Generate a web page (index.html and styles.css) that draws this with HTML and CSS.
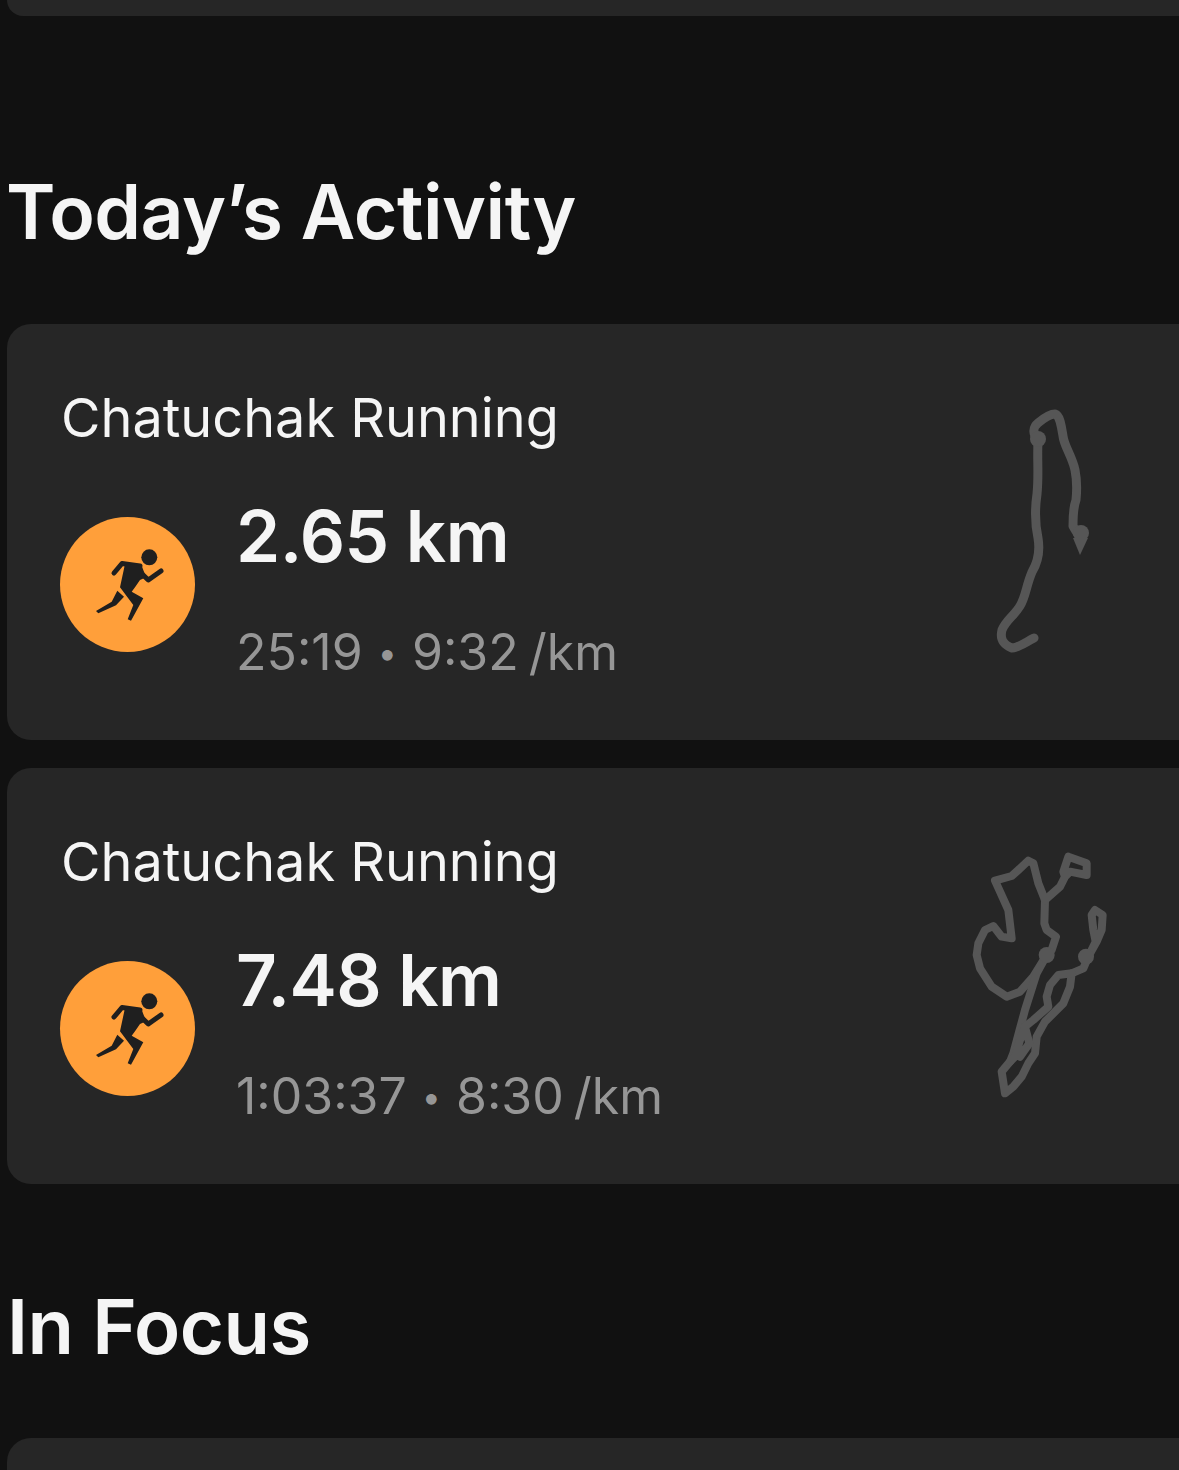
FILE: index.html
```html
<!DOCTYPE html>
<html lang="en">
<head>
    <meta charset="UTF-8">
    <title>Today's Activity</title>
    <link rel="stylesheet" href="styles.css">
</head>
<body>

    <!-- Bottom of the card above -->
    <div class="card-top-stub"></div>

    <h2 class="section-title first">Today’s Activity</h2>

    <div class="card">
        <div class="card-info">
            <div class="card-name">Chatuchak Running</div>
            <div class="card-row">
                <div class="run-badge">
                    <svg class="run-icon" viewBox="0 0 135 135">
                        <circle cx="89.3" cy="40.3" r="8"/>
                        <path class="limb" d="M54 56 L62 46.5 L80 49 M80 55 L88.3 63 L101 54"/>
                        <path d="M65 47 L81.7 48.7 L86 60.3 L80 63 L75 70.3 L71.7 74.7 L83.3 81.3 L71 103.7 L67.7 102.3 L73.3 88 L60 70.3 Z"/>
                        <path d="M57.3 73.7 L64 79.7 L56 88.3 L38.3 96.3 L36 94 L51.7 84.7 Z"/>
                    </svg>
                </div>
                <div class="stats">
                    <div class="distance">2.65 km</div>
                    <div class="pace">25:19 <span class="dot">•</span> 9:32 /km</div>
                </div>
            </div>
        </div>
        <svg class="track" viewBox="0 0 160 280">
            <path d="M78 50 C72 44 73 37 78 33 C84 28 90 24 95 24 C100 26 101 34 103 46 C104 56 112 66 115 80 C117 90 117 100 116 110 C113 118 113 126 113 136 C116 142 120 146 120 150 M78 52 C77 70 79 84 77 104 C75 118 75 134 78 148 C80 160 78 172 72 182 C66 196 66 206 60 216 C54 226 46 230 42 240 C40 248 42 254 52 258 C58 258 66 252 74 248"/>
            <circle cx="78" cy="49" r="8"/>
            <circle cx="121" cy="143" r="8"/>
            <path class="track-tip" d="M113 148 L128 148 L120 165 Z"/>
        </svg>
    </div>

    <div class="card">
        <div class="card-info">
            <div class="card-name">Chatuchak Running</div>
            <div class="card-row">
                <div class="run-badge">
                    <svg class="run-icon" viewBox="0 0 135 135">
                        <circle cx="89.3" cy="40.3" r="8"/>
                        <path class="limb" d="M54 56 L62 46.5 L80 49 M80 55 L88.3 63 L101 54"/>
                        <path d="M65 47 L81.7 48.7 L86 60.3 L80 63 L75 70.3 L71.7 74.7 L83.3 81.3 L71 103.7 L67.7 102.3 L73.3 88 L60 70.3 Z"/>
                        <path d="M57.3 73.7 L64 79.7 L56 88.3 L38.3 96.3 L36 94 L51.7 84.7 Z"/>
                    </svg>
                </div>
                <div class="stats">
                    <div class="distance">7.48 km</div>
                    <div class="pace">1:03:37 <span class="dot">•</span> 8:30 /km</div>
                </div>
            </div>
        </div>
        <svg class="track track-two" viewBox="0 0 540 810">
            <path d="M285 180 L283 250 L290 270 L318 290 L305 330 L290 345 M285 180 L265 130 L250 70 L235 62 L205 90 L185 108 L135 122 L150 155 L175 210 L185 295 L155 290 L130 258 L105 270 L85 310 L80 345 L90 385 L125 440 L170 470 L210 455 L250 410 L290 345"/>
            <path d="M285 180 L330 140 L345 110 L340 95 L355 50 L410 70 L410 105 L360 95 L345 110"/>
            <path d="M290 345 L260 400 L225 510 L190 640 L180 665 L155 695 L165 760 L190 740 L215 710 L235 670 L255 640 L260 590 L285 545 L340 490 L360 440 L365 400 L400 385 L415 350 L440 305 L455 270 L458 225 L435 210 L425 225 L430 270 L437 305 L415 350"/>
            <path d="M365 400 L325 405 L300 435 L290 470 L295 500 L250 540 L225 560 L210 600 L195 650 L180 665 M225 560 L238 610 L210 650"/>
            <circle cx="290" cy="345" r="24"/>
            <circle cx="408" cy="350" r="24"/>
        </svg>
    </div>

    <h2 class="section-title second">In Focus</h2>

    <div class="card card-cut"></div>

</body>
</html>
```

FILE: styles.css
```css
html, body {
    margin: 0;
    padding: 0;
    height: 1470px;
    overflow: hidden;
}
body {
    font-family: Inter, "Liberation Sans", sans-serif;
    background-color: #111111;
    color: #f5f5f5;
}
.card-top-stub {
    height: 16px;
    margin-left: 7px;
    margin-right: -30px;
    background: #262626;
    border-radius: 0 0 24px 24px;
}
.section-title {
    margin: 0 0 0 6px;
    font-size: 75px;
    font-weight: 600;
    line-height: 84px;
    letter-spacing: -0.5px;
}
.section-title.first {
    margin-top: 154px;
    margin-bottom: 70px;
}
.section-title.second {
    margin-top: 100px;
    margin-bottom: 70px;
    margin-left: 7px;
    font-size: 76px;
}
.card {
    display: flex;
    justify-content: space-between;
    box-sizing: border-box;
    height: 416px;
    margin-left: 7px;
    margin-right: -30px;
    margin-bottom: 28px;
    padding: 62px 89px 0 54px;
    background: #262626;
    border-radius: 24px;
}
.card-name {
    font-size: 54px;
    font-weight: 400;
    line-height: 64px;
}
.card-row {
    display: flex;
    gap: 41px;
    margin-top: 42px;
}
.run-badge {
    width: 135px;
    height: 135px;
    margin-top: 25px;
    margin-left: -1px;
    border-radius: 50%;
    background: #ff9f3a;
}
.run-icon {
    display: block;
    width: 135px;
    height: 135px;
    fill: #1f1f1f;
}
.run-icon .limb {
    fill: none;
    stroke: #1f1f1f;
    stroke-width: 5;
    stroke-linecap: round;
    stroke-linejoin: round;
}
.stats {
    padding-top: 2px;
}
.distance {
    font-size: 71px;
    font-weight: 600;
    line-height: 84px;
    letter-spacing: -0.6px;
}
.pace {
    margin-top: 44px;
    font-size: 50px;
    line-height: 60px;
    word-spacing: -4px;
    color: #969696;
}
.dot {
    font-size: 34px;
    vertical-align: 5px;
    margin: 0 5px;
}
.track {
    flex: none;
    width: 160px;
    height: 280px;
    margin-top: 4px;
    fill: #565656;
}
.track path {
    fill: none;
    stroke: #565656;
    stroke-width: 9;
    stroke-linecap: round;
    stroke-linejoin: round;
}
.track .track-tip {
    fill: #565656;
    stroke: none;
}
.track-two {
    width: 180px;
    height: 270px;
    margin-top: 10px;
    margin-right: -10px;
}
.track-two path {
    stroke-width: 24;
}
.card-cut {
    height: 32px;
    margin-bottom: 0;
}
```
